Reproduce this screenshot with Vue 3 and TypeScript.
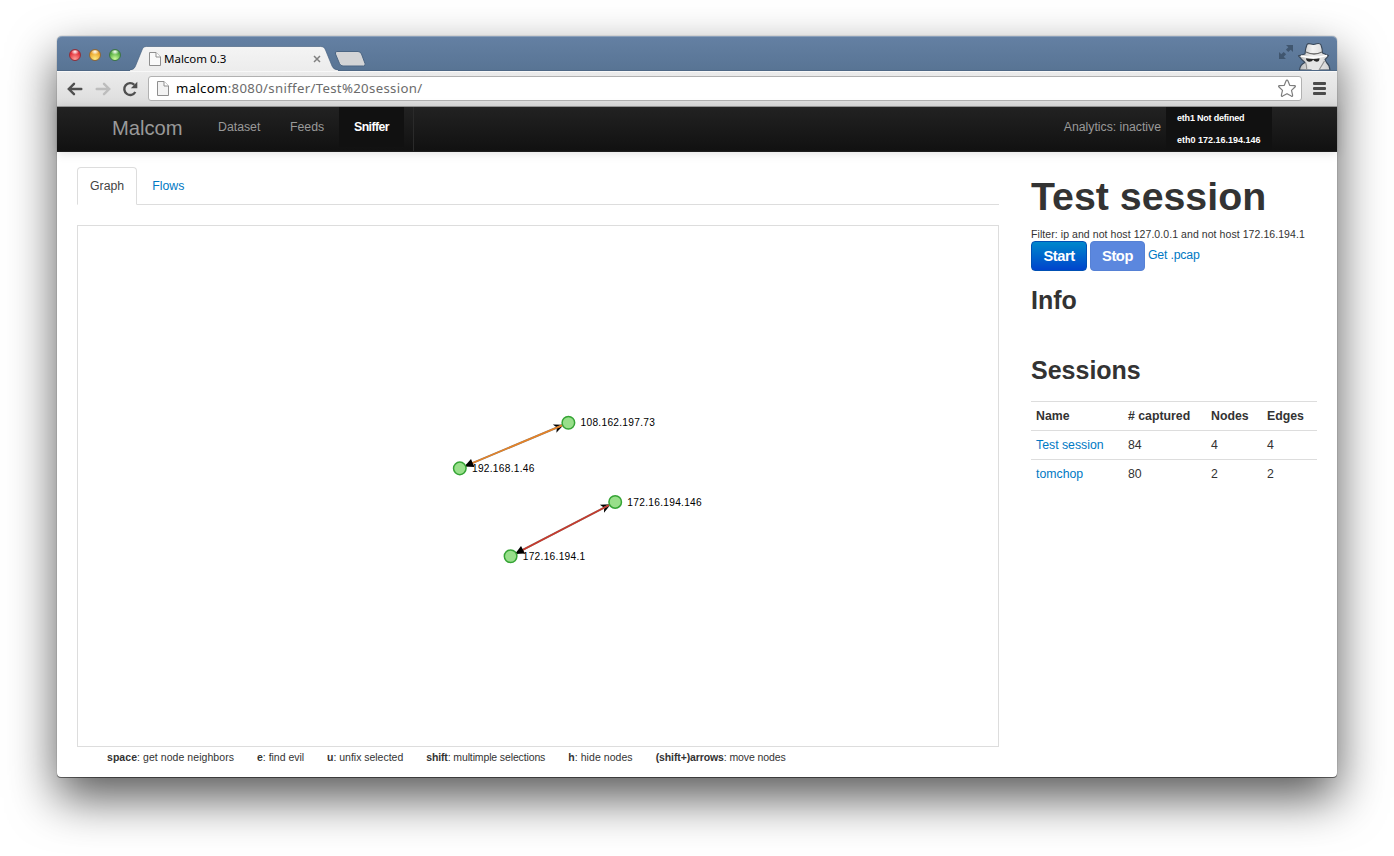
<script setup lang="ts">
interface GraphNode { id: string; x: number; y: number }
interface GraphLink { from: number; to: number; color: string }
interface Session { name: string; captured: number; nodes: number; edges: number }

const nodes: GraphNode[] = [
  { id: '108.162.197.73', x: 490.5, y: 196.5 },
  { id: '192.168.1.46', x: 381.5, y: 242.3 },
  { id: '172.16.194.146', x: 537.5, y: 276 },
  { id: '172.16.194.1', x: 432.5, y: 330.5 },
]
const links: GraphLink[] = [
  { from: 0, to: 1, color: '#e98324' },
  { from: 2, to: 3, color: '#c9372c' },
]
const sessions: Session[] = [
  { name: 'Test session', captured: 84, nodes: 4, edges: 4 },
  { name: 'tomchop', captured: 80, nodes: 2, edges: 2 },
]
const shortcuts = [
  { key: 'space', text: 'get node neighbors' },
  { key: 'e', text: 'find evil' },
  { key: 'u', text: 'unfix selected' },
  { key: 'shift', text: 'multimple selections' },
  { key: 'h', text: 'hide nodes' },
  { key: '(shift+)arrows', text: 'move nodes' },
]

/* Places an arrowhead on a node's rim, pointing at the node's centre. */
function headTransform(at: number, other: number): string {
  const a = nodes[at]
  const b = nodes[other]
  const angle = (Math.atan2(a.y - b.y, a.x - b.x) * 180) / Math.PI
  return `translate(${a.x} ${a.y}) rotate(${angle})`
}
</script>

<template>
  <div class="desktop">
    <div class="window">
      <header class="titlebar">
        <div class="lights">
          <i class="light red"></i><i class="light yellow"></i><i class="light green"></i>
        </div>
        <div class="tab">
          <svg class="tab-shape" width="208" height="25" viewBox="0 0 208 25">
            <defs>
              <linearGradient id="tabFill" x1="0" y1="0" x2="0" y2="1">
                <stop offset="0" stop-color="#f4f4f4" /><stop offset="1" stop-color="#ececec" />
              </linearGradient>
            </defs>
            <path d="M0 25 V24 C3 24 4.500 22.500 5.500 20 L12 4 C13 1.500 14 .5 16.500 .5 H190.500 C193 .5 194.500 1.500 195.500 4 L202 20 C203 22.500 205 24 208 24 V25 Z" fill="url(#tabFill)" />
            <path d="M0 23.800 C3 23.500 4.500 22.500 5.500 20 L12 4 C13 1.500 14 .5 16.500 .5 H190.500 C193 .5 194.500 1.500 195.500 4 L202 20 C203 22.500 205 23.500 208 23.800" fill="none" stroke="#3f5a7a" stroke-opacity=".6" />
          </svg>
          <svg class="page" width="12" height="14" viewBox="0 0 12 14">
            <path d="M.5 .5 H7 L11.500 5 V13.500 H.5 Z" fill="#fafafa" stroke="#8f8f8f" />
            <path d="M7 .5 V5 H11.500" fill="#fff" stroke="#8f8f8f" />
          </svg>
          <span class="tab-title">Malcom 0.3</span>
          <svg class="close" width="8" height="8" viewBox="0 0 8 8"><path d="M1 1 L7 7 M7 1 L1 7" stroke="#808080" stroke-width="1.500" /></svg>
        </div>
        <svg class="new-tab" width="32" height="16" viewBox="0 0 32 16">
          <path d="M3 .5 H24 Q26.500 .5 27.500 3 L31 12.500 Q31.800 15 29.500 15 H9 Q6.500 15 5.500 12.500 L1.500 3 Q.7 .5 3 .5 Z" fill="#d3d4d6" stroke="#4b6583" />
        </svg>
        <div class="title-right">
          <svg class="expand" width="16" height="16" viewBox="0 0 16 16" fill="#40566f">
            <path d="M8 1 H15 V8 L12.700 5.700 L10.300 8.100 L7.900 5.700 L10.300 3.300 Z" />
            <path d="M1 8 L3.300 10.300 L5.700 7.900 L8.100 10.300 L5.700 12.700 L8 15 H1 Z" />
          </svg>
          <svg class="spy" width="34" height="28" viewBox="0 0 34 28">
            <defs>
              <linearGradient id="hat" x1="0" y1="0" x2="1" y2="0">
                <stop offset="0" stop-color="#b4b4b4" /><stop offset=".45" stop-color="#f2f2f2" /><stop offset="1" stop-color="#cfcfcf" />
              </linearGradient>
            </defs>
            <path d="M2.500 28 Q3 22.500 8 20.500 Q4.500 17.500 1.500 13.800 L8 12 Q8.200 7 10 2.500 Q11 1 14 2 Q16.500 3 19.500 1.800 Q23 1 24 3 Q25.500 7 25.500 11 L31.500 13.500 Q30 16 28 17.500 L29.500 20.500 Q32.500 23 33 28 Z" fill="url(#hat)" stroke="#39485a" stroke-width="1.100" stroke-linejoin="round" />
            <path d="M9 10 Q17 14 25 10" fill="none" stroke="#686868" stroke-width="1.300" />
            <path d="M4 14 Q16 17 30 13.500" fill="none" stroke="#fff" stroke-width="1.300" />
            <path d="M9 16.500 L25.500 16.500 L25 23 L22 28 H15 L10 22 Z" fill="#e4e4e4" />
            <path d="M9 16.300 Q17 17.500 22.500 16.300 Q22.500 19.800 19.500 19.800 Q17 19.500 16.200 17.800 Q15 19.800 12.500 19.800 Q9 19.500 9 16.300 Z" fill="#282828" />
            <path d="M8.500 20.500 Q10 24 9.500 28 M27.500 19 L22 28" fill="none" stroke="#909090" stroke-width="1.100" />
          </svg>
        </div>
      </header>

      <div class="toolbar">
        <svg class="back" width="16" height="14" viewBox="0 0 16 14" fill="none" stroke="#4f4f4f" stroke-width="2.400" stroke-linecap="round"><path d="M7 1.800 L1.800 7 L7 12.200 M2.500 7 H14.300" /></svg>
        <svg class="forward" width="16" height="14" viewBox="0 0 16 14" fill="none" stroke="#bdbdbd" stroke-width="2.400" stroke-linecap="round"><path d="M9 1.800 L14.200 7 L9 12.200 M13.500 7 H1.700" /></svg>
        <svg class="reload" width="16" height="16" viewBox="0 0 16 16"><path d="M13.300 11 A5.900 5.900 0 1 1 12.300 3.800" fill="none" stroke="#4f4f4f" stroke-width="2.400" /><path d="M15.300 .8 V7.200 H8.900 Z" fill="#4f4f4f" /></svg>
        <div class="omnibox">
          <svg class="page" width="12" height="15" viewBox="0 0 12 15">
            <path d="M.5 .5 H7 L11.500 5 V14.500 H.5 Z" fill="#f3f3f3" stroke="#8f8f8f" />
            <path d="M7 .5 V5 H11.500" fill="#fff" stroke="#8f8f8f" />
          </svg>
          <span class="url"><b>malcom</b>:8080/sniffer/Test%20session/</span>
          <svg class="star" width="20" height="19" viewBox="0 0 20 19"><path d="M10 1.200 Q10.700 1.200 11 2 L12.700 6.300 L17.600 6.700 Q19 7 18 8 L14.500 11.400 L15.600 16.200 Q15.700 17.800 14.300 17.100 L10 14.700 L5.700 17.100 Q4.300 17.800 4.400 16.200 L5.500 11.400 L2 8 Q1 7 2.400 6.700 L7.300 6.300 L9 2 Q9.300 1.200 10 1.200 Z" fill="#fff" stroke="#7d7d7d" stroke-width="1.200" stroke-linejoin="round" /></svg>
        </div>
        <div class="menu"><i></i><i></i><i></i></div>
      </div>

      <nav class="navbar">
        <a class="brand">Malcom</a>
        <a class="nav-item dataset">Dataset</a>
        <a class="nav-item feeds">Feeds</a>
        <a class="nav-item active">Sniffer</a>
        <i class="divider"></i>
        <span class="analytics">Analytics: inactive</span>
        <div class="interfaces"><span><b>eth1</b> Not defined</span><span><b>eth0</b> 172.16.194.146</span></div>
      </nav>

      <div class="content">
        <main class="main">
          <div class="tabs">
            <a class="pill current">Graph</a>
            <a class="pill">Flows</a>
          </div>
          <svg class="graph" width="922" height="522" viewBox="-1 -1 922 522">
            <g v-for="l in links" :key="l.color">
              <path d="M-5 0 L-15 -4.500 L-12.500 0 L-15 4.500 Z" :transform="headTransform(l.from, l.to)" />
              <line :x1="nodes[l.from].x" :y1="nodes[l.from].y" :x2="nodes[l.to].x" :y2="nodes[l.to].y" stroke="#8b7c70" stroke-width="2" />
              <line :x1="nodes[l.from].x" :y1="nodes[l.from].y" :x2="nodes[l.to].x" :y2="nodes[l.to].y" :stroke="l.color" stroke-width="1.500" />
              <path d="M-5 0 L-14 -4.300 V4.300 Z" :transform="headTransform(l.to, l.from)" />
            </g>
            <g v-for="n in nodes" :key="n.id">
              <circle :cx="n.x" :cy="n.y" r="6.300" fill="#98df8a" stroke="#35a435" stroke-width="1.500" />
              <text :x="n.x + 12.200" :y="n.y + 3.600">{{ n.id }}</text>
            </g>
          </svg>
          <div class="shortcuts">
            <span v-for="s in shortcuts" :key="s.key"><b>{{ s.key }}</b>: {{ s.text }}</span>
          </div>
        </main>

        <aside class="side">
          <h1>Test session</h1>
          <p class="filter">Filter: ip and not host 127.0.0.1 and not host 172.16.194.1</p>
          <div class="actions">
            <button class="btn">Start</button>
            <button class="btn off">Stop</button>
            <a>Get .pcap</a>
          </div>
          <h3>Info</h3>
          <h3 class="sessions-title">Sessions</h3>
          <table>
            <thead><tr><th class="c1">Name</th><th class="c2"># captured</th><th class="c3">Nodes</th><th>Edges</th></tr></thead>
            <tbody>
              <tr v-for="s in sessions" :key="s.name"><td><a>{{ s.name }}</a></td><td>{{ s.captured }}</td><td>{{ s.nodes }}</td><td>{{ s.edges }}</td></tr>
            </tbody>
          </table>
        </aside>
      </div>
    </div>
  </div>
</template>

<style>
html, body { margin: 0; background: #fff; overflow: hidden; }
</style>

<style scoped>
* { box-sizing: border-box; }
.desktop { width: 1394px; height: 856px; padding: 36px 57px 0; overflow: hidden; background: #fff; font: 12.3px/20px "Liberation Sans", Arial, sans-serif; color: #333; }
.window { width: 1280px; height: 741px; border-radius: 5px 5px 4px 4px; background: #fff; box-shadow: 0 0 1px rgba(0, 0, 0, .7), 0 1px 0 rgba(0, 0, 0, .45), 0 21px 48px rgba(0, 0, 0, .66); display: flex; flex-direction: column; }
svg { display: block; flex: none; }

.titlebar { height: 35px; flex: none; display: flex; border-radius: 5px 5px 0 0; background: linear-gradient(#6480a3, #587494); border-top: 1px solid #8ba0ba; border-bottom: 1px solid #4f6885; }
.lights { display: flex; gap: 8px; padding: 12px 0 0 12px; width: 76px; }
.light { width: 12px; height: 12px; border-radius: 50%; flex: none; border: 1px solid; }
.red { background: radial-gradient(ellipse 4px 3px at 50% 18%, #fff, transparent), radial-gradient(circle at 50% 90%, #ff9d96, #e3303a 65%); border-color: #90303a; }
.yellow { background: radial-gradient(ellipse 4px 3px at 50% 18%, #fff, transparent), radial-gradient(circle at 50% 90%, #ffec82, #eca42a 65%); border-color: #8e6838; }
.green { background: radial-gradient(ellipse 4px 3px at 50% 18%, #fff, transparent), radial-gradient(circle at 50% 90%, #ceff9b, #55ad42 65%); border-color: #3d7546; }
.tab { position: relative; width: 202px; height: 25px; margin-top: 10px; display: flex; padding: 5px 0 0 16px; }
.tab-shape { position: absolute; left: -3px; top: -1px; }
.tab .page, .tab-title, .close { position: relative; }
.tab-title { font: 11.500px/14px "Noto Sans", sans-serif; color: #000; margin-left: 3px; width: 149px; }
.close { margin-top: 3px; }
.new-tab { margin: 14px 0 0 -1px; }
.title-right { margin-left: auto; display: flex; padding-right: 6px; gap: 3px; }
.expand { margin-top: 7px; }
.spy { margin-top: 5px; }

.toolbar { height: 36px; flex: none; display: flex; align-items: flex-start; background: linear-gradient(#ececec, #dcdcdc); border-top: 1px solid #f8f8f8; border-bottom: 1px solid #9b9b9b; padding-left: 10px; }
.back { margin-top: 10px; }
.forward { margin: 10px 0 0 12px; }
.reload { margin: 9px 0 0 11px; }
.omnibox { width: 1154px; height: 25px; margin: 4px 0 0 10px; border: 1px solid #b1b1b1; border-radius: 3px; background: #fff; display: flex; align-items: center; padding: 0 4px 0 8px; }
.url { font: 13.2px/20px "Noto Sans", sans-serif; letter-spacing: .33px; height: 21px; color: #6b6b6b; margin-left: 7px; flex: 1; }
.url b { font-weight: 400; color: #000; }
.menu { width: 13px; margin: 10px 0 0 11px; display: flex; flex-direction: column; gap: 2px; }
.menu i { height: 3px; border-radius: 1px; background: #4b4b4b; }

.navbar { height: 45px; flex: none; display: flex; background: linear-gradient(#222, #111); color: #999; box-shadow: 0 1px 10px rgba(0, 0, 0, .13); border-bottom: 1px solid #1d1d1d; padding-left: 55px; line-height: 41px; white-space: nowrap; }
.brand { font-size: 20.2px; width: 106px; line-height: 42px; }
.dataset { width: 72px; }
.feeds { width: 49px; }
.active { width: 65px; height: 40px; padding-left: 15px; background: #111; color: #fff; font-weight: 700; letter-spacing: -.55px; }
.divider { width: 1px; margin-left: 9px; background: #2a2a2a; }
.analytics { margin-left: auto; letter-spacing: -.03px; }
.interfaces { width: 106px; height: 44px; margin: 0 65px 0 5px; padding-left: 11px; background: #111; color: #fff; font-size: 9px; font-weight: 700; line-height: 22px; display: flex; flex-direction: column; }
.interfaces span:first-child { letter-spacing: -.2px; }

.content { flex: 1; display: flex; justify-content: space-between; padding: 15px 20px 0; }
.main { width: 922px; }
.tabs { height: 38px; border-bottom: 1px solid #ddd; display: flex; gap: 2px; }
.pill { height: 38px; line-height: 36px; border: 1px solid transparent; padding: 0 12px; color: #0079c4; }
.current { color: #444; background: #fff; border-color: #ddd #ddd #fff; border-radius: 4px 4px 0 0; }
.graph { margin-top: 20px; border: 1px solid #ddd; }
.graph text { font: 10.2px "Liberation Sans", Arial, sans-serif; letter-spacing: .29px; fill: #000; }
.shortcuts { display: flex; gap: 23px; padding-left: 30px; font-size: 10.5px; letter-spacing: .06px; line-height: 21px; white-space: nowrap; }
.shortcuts span:nth-child(2), .shortcuts span:nth-child(3) { letter-spacing: -.02px; }
.shortcuts span:nth-child(4) { letter-spacing: -.13px; }
.shortcuts span:nth-child(6) { letter-spacing: -.11px; }

.side { width: 286px; }
h1 { margin: 9px 0 0; font-size: 39.3px; line-height: 40px; white-space: nowrap; }
.filter { margin: 9px 0 0; height: 16px; font-size: 10.5px; line-height: 18px; letter-spacing: .07px; white-space: nowrap; }
.actions { display: flex; gap: 3px; line-height: 28px; }
a { color: inherit; }
.actions a, td a { color: #0079c4; }
.actions a { letter-spacing: -.2px; }
.btn { height: 30px; width: 56px; padding: 0; border: 1px solid #0050b4; border-radius: 4px; background: linear-gradient(#08c, #04c); color: #fff; font: 700 14.700px/28px "Liberation Sans", Arial, sans-serif; letter-spacing: -.45px; }
.off { width: 55px; background: #5b87de; border-color: #5681d5; }
h3 { margin: 9px 0 0; font-size: 25px; line-height: 40px; }
.sessions-title { margin-top: 30px; }
table { width: 286px; margin-top: 11px; border-collapse: collapse; table-layout: fixed; text-align: left; }
th, td { padding: 4px 5px; border-top: 1px solid #ddd; height: 29px; line-height: 20px; }
.c1 { width: 92px; }
.c2 { width: 83px; }
.c3 { width: 56px; }
</style>
